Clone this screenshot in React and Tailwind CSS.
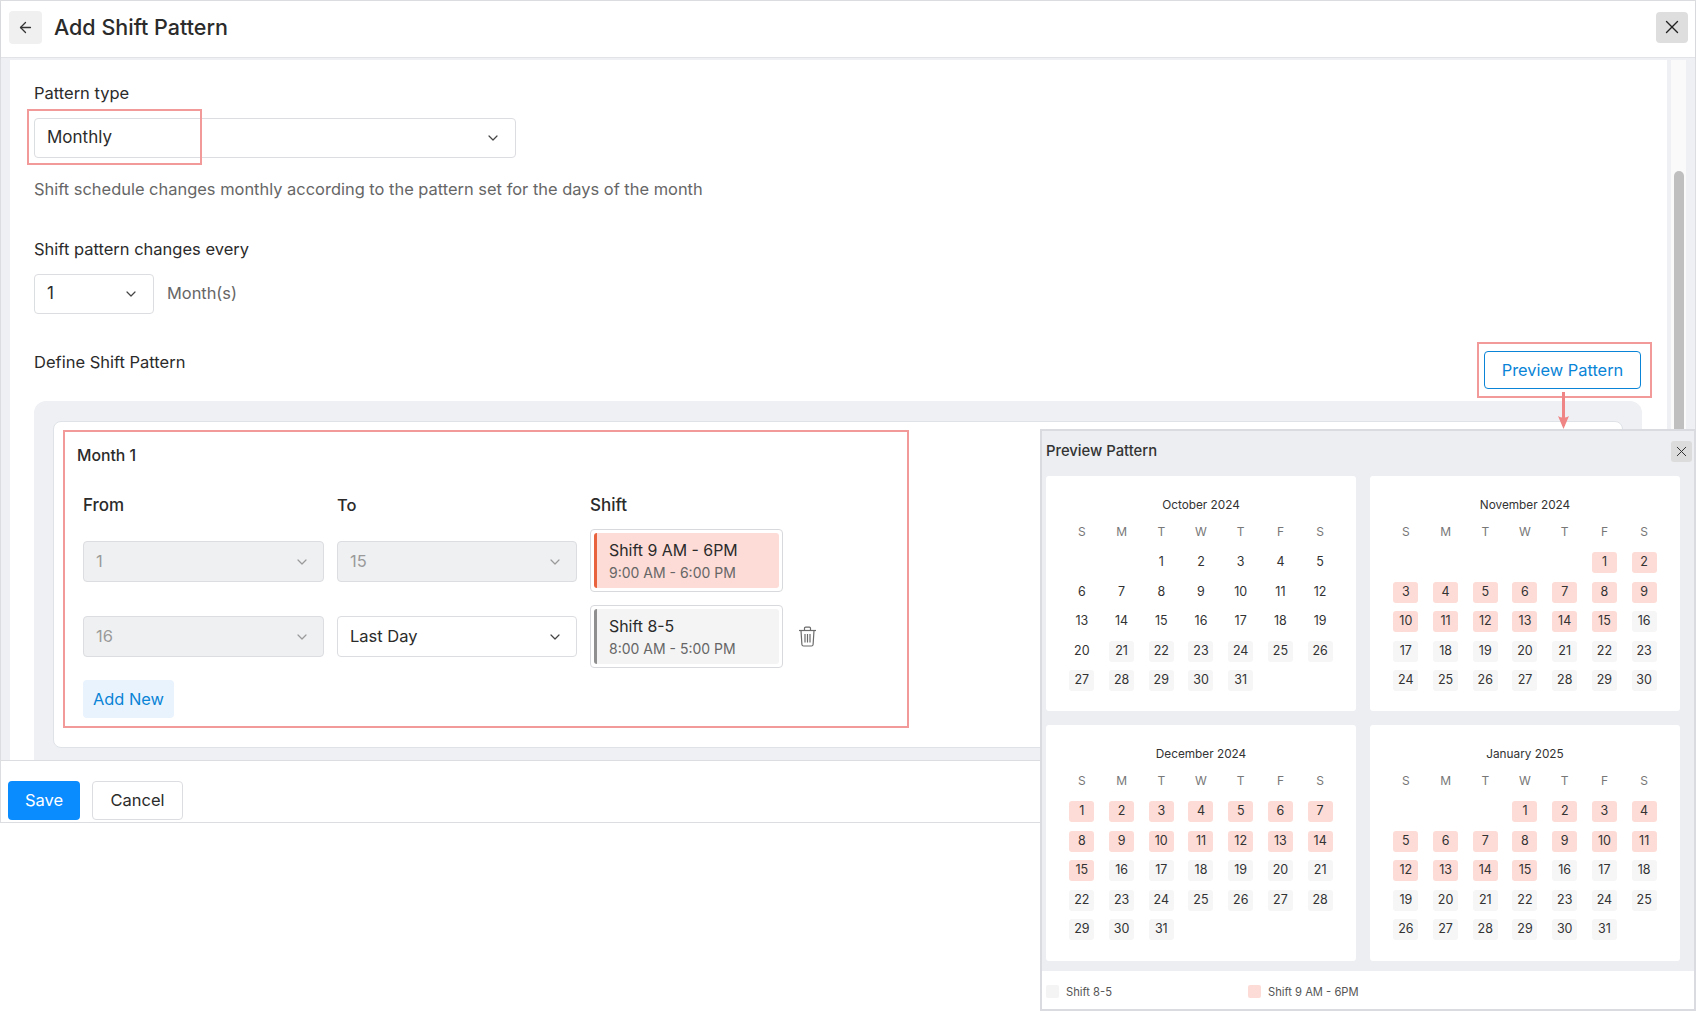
import React from "react";
import { ArrowLeft, ChevronDown, X } from "lucide-react";

const WEEK = ["S", "M", "T", "W", "T", "F", "S"];
const MONTHS = [
  { name: "October 2024", offset: 2, days: 31, pink: [0, 0], gray: 21 },
  { name: "November 2024", offset: 5, days: 30, pink: [1, 15], gray: 16 },
  { name: "December 2024", offset: 0, days: 31, pink: [1, 15], gray: 16 },
  { name: "January 2025", offset: 3, days: 31, pink: [1, 15], gray: 16 },
];

function Select({ value, disabled, lift, className }) {
  return (
    <div
      className={
        "flex items-center justify-between rounded-[4px] border pl-[12px] " +
        (disabled
          ? "border-[#dcdde0] bg-[#eff0f2] text-[#9a9a9a] "
          : "border-[#dcdde0] bg-white text-[#2b2b2b] ") +
        className
      }
    >
      <span className={lift ? "text-[17px]" : "text-[16.5px]"}>{value}</span>
      <ChevronDown
        size={16}
        strokeWidth={1.8}
        className={disabled ? "text-[#9a9a9a]" : "text-[#444]"}
      />
    </div>
  );
}

function ShiftCard({ title, time, bg, bar }) {
  return (
    <div className="h-[63px] rounded-[4px] border border-[#d8d9dc] bg-white p-[3px]">
      <div className={"flex h-full flex-col rounded-[3px] border-l-[3px] pl-[12px] pt-[6px] " + bg + " " + bar}>
        <span className="h-[23px] text-[15.9px] leading-[23px] text-[#2b2b2b]">{title}</span>
        <span className="h-[21px] text-[14px] leading-[21px] text-[#666]">{time}</span>
      </div>
    </div>
  );
}

function Calendar({ month }) {
  const cells = [];
  for (let i = 0; i < month.offset; i++) cells.push(<div key={"e" + i} />);
  for (let d = 1; d <= month.days; d++) {
    const pink = d >= month.pink[0] && d <= month.pink[1] && month.pink[0] > 0;
    const gray = d >= month.gray;
    cells.push(
      <div key={d} className="flex items-center justify-center">
        <div
          className={
            "flex h-[21px] w-[25px] items-center justify-center rounded-[3px] text-[12.5px] text-[#333] " +
            (pink ? "bg-[#fddcd7]" : gray ? "bg-[#f6f6f7]" : "")
          }
        >
          {d}
        </div>
      </div>
    );
  }
  return (
    <div className="min-h-[235px] rounded-[3px] bg-white px-[16px] pt-[20px]">
      <div className="h-[18px] text-center text-[11.8px] leading-[18px] text-[#333]">{month.name}</div>
      <div className="mt-[9px] grid h-[18px] grid-cols-7 text-center text-[12px] leading-[18px] text-[#777]">
        {WEEK.map((w, i) => (
          <div key={i}>{w}</div>
        ))}
      </div>
      <div className="mt-[7px] grid grid-cols-7 auto-rows-[29.5px]">{cells}</div>
    </div>
  );
}

function Trash() {
  return (
    <svg width="19" height="21" viewBox="0 0 19 21" fill="none" stroke="#6b6b6b" strokeWidth="1.2" className="ml-[2px]">
      <path d="M1 4.5h17" />
      <path d="M6.5 4.5V2.2c0-.7.4-1.1 1.1-1.1h3.8c.7 0 1.1.4 1.1 1.1v2.3" />
      <path d="M3 4.5l.9 14c.1 1 .7 1.5 1.6 1.5h8c.9 0 1.5-.5 1.6-1.5l.9-14" />
      <path d="M7 8v8.5M9.5 8v8.5M12 8v8.5" />
    </svg>
  );
}

export default function App() {
  return (
    <div className="relative h-[1011px] w-[1696px] overflow-hidden bg-white font-['Inter',sans-serif] text-[#2b2b2b]">
      <div className="flex h-[823px] flex-col border border-[#dcdde0]">
        <header className="flex h-[57px] shrink-0 items-center justify-between border-b border-[#e2e3e7] pb-[4px] pl-[8px] pr-[7px] shadow-[0_1px_2px_rgba(0,0,0,0.06)]">
          <div className="flex items-center">
            <div className="flex h-[33px] w-[33px] items-center justify-center rounded-[4px] bg-[#f0f0f1]">
              <ArrowLeft size={17} strokeWidth={1.8} className="text-[#333]" />
            </div>
            <h1 className="ml-[12px] text-[21.5px] font-medium text-[#2b2b2b]">Add Shift Pattern</h1>
          </div>
          <div className="flex h-[31px] w-[32px] items-center justify-center rounded-[4px] bg-[#dedede]">
            <X size={22} strokeWidth={1.5} className="text-[#222]" />
          </div>
        </header>

        <div className="flex min-h-0 flex-1 bg-[#eef0f4] pt-[2px]">
          <div className="w-[9px] shrink-0" />
          <main className="min-w-0 flex-1 overflow-hidden bg-white pl-[24px] pt-[23px]">
            <div className="h-[20px] text-[16.5px] leading-[20px]">Pattern type</div>
            <Select value="Monthly" lift className="mt-[15px] h-[40px] w-[482px] pr-[14px]" />
            <div className="mt-[19px] h-[24px] text-[16.45px] leading-[24px] text-[#666]">
              Shift schedule changes monthly according to the pattern set for the days of the month
            </div>
            <div className="mt-[38px] h-[20px] text-[16.5px] leading-[20px]">Shift pattern changes every</div>
            <div className="mt-[15px] flex items-center">
              <Select value="1" lift className="h-[40px] w-[120px] pr-[14px]" />
              <span className="ml-[13px] pb-[2px] text-[16.4px] text-[#666]">Month(s)</span>
            </div>
            <div className="mt-[37px] flex h-[38px] w-[1608px] items-start justify-between">
              <span className="pt-[1px] text-[16.5px] leading-[20px]">Define Shift Pattern</span>
              <button className="mr-[1px] h-[38px] w-[157px] rounded-[4px] border border-[#0a84d6] bg-white text-[16.4px] text-[#0a84d6]">
                Preview Pattern
              </button>
            </div>
            <section className="mt-[12px] h-[400px] w-[1608px] rounded-t-[12px] bg-[#eef0f3] px-[19px] pt-[20px]">
              <div className="h-[327px] rounded-[8px] border border-[#dfe3e8] bg-white pl-[23px] pt-[24px]">
                <div className="h-[20px] text-[15.8px] font-medium leading-[20px]">Month 1</div>
                <div className="ml-[6px] mt-[29px] grid grid-cols-[241px_240px_193px_auto] justify-start gap-x-[13px]">
                  <div className="h-[20px] text-[17px] font-medium leading-[20px]">From</div>
                  <div className="h-[20px] text-[16.5px] font-medium leading-[20px]">To</div>
                  <div className="h-[20px] text-[17px] font-medium leading-[20px]">Shift</div>
                  <div />
                </div>
                <div className="ml-[6px] mt-[14px] grid grid-cols-[241px_240px_193px_auto] items-center justify-start gap-x-[13px]">
                  <Select value="1" disabled className="mt-[2px] h-[41px] pr-[13px]" />
                  <Select value="15" disabled className="mt-[2px] h-[41px] pr-[13px]" />
                  <ShiftCard title="Shift 9 AM - 6PM" time="9:00 AM - 6:00 PM" bg="bg-[#fddcd7]" bar="border-[#e8623d]" />
                  <div />
                </div>
                <div className="ml-[6px] mt-[13px] grid grid-cols-[241px_240px_193px_auto] items-center justify-start gap-x-[13px]">
                  <Select value="16" disabled className="h-[41px] pr-[13px]" />
                  <Select value="Last Day" className="h-[41px] pr-[13px]" />
                  <ShiftCard title="Shift 8-5" time="8:00 AM - 5:00 PM" bg="bg-[#f4f4f5]" bar="border-[#8f8f8f]" />
                  <Trash />
                </div>
                <button className="ml-[6px] mt-[12px] h-[38px] w-[91px] rounded-[4px] bg-[#e9f3fd] text-[16.4px] text-[#0a84d6]">
                  Add New
                </button>
              </div>
            </section>
          </main>
          <div className="w-[4px] shrink-0" />
          <div className="w-[15px] shrink-0 bg-[#fafafa] pl-[3px] pt-[111px]">
            <div className="h-[400px] w-[10px] rounded-full bg-[#bfbfbf]" />
          </div>
          <div className="w-[9px] shrink-0" />
        </div>

        <footer className="flex h-[62px] shrink-0 items-start gap-[12px] border-t border-[#dcdde0] bg-white pl-[7px] pt-[20px]">
          <button className="h-[39px] w-[72px] rounded-[4px] bg-[#0a8cff] text-[16.5px] text-white">Save</button>
          <button className="h-[39px] w-[91px] rounded-[4px] border border-[#dcdde0] bg-white text-[16.5px] text-[#2b2b2b]">
            Cancel
          </button>
        </footer>
      </div>

      {/* annotations */}
      <div className="absolute left-[27px] top-[109px] h-[56px] w-[175px] border-2 border-[#f29a9a]" />
      <div className="absolute left-[1477px] top-[342px] h-[56px] w-[175px] border-2 border-[#f29a9a]" />
      <div className="absolute left-[63px] top-[430px] h-[298px] w-[846px] border-2 border-[#f29a9a]" />
      <svg className="absolute left-[1557px] top-[392px]" width="14" height="38" viewBox="0 0 14 38" fill="none">
        <path d="M6.5 0v34" stroke="#f08585" strokeWidth="3" />
        <path d="M1 24l5.5 13L12 24c-3.4 2-7.6 2-11 0z" fill="#f08585" />
      </svg>

      {/* preview popup */}
      <aside className="absolute bottom-0 left-[1040px] right-0 top-[429px] flex flex-col border-2 border-[#d9dbe0] bg-[#eceef2]">
        <div className="flex h-[45px] shrink-0 items-center justify-between pb-[5px] pl-[4px] pr-[2px]">
          <span className="text-[14.8px] font-medium text-[#333]">Preview Pattern</span>
          <div className="flex h-[21px] w-[21px] items-center justify-center rounded-[3px] bg-[#dcdcdc]">
            <X size={17} strokeWidth={1.4} className="text-[#333]" />
          </div>
        </div>
        <div className="ml-[4px] grid w-[634px] grid-cols-2 grid-rows-[235px_236px] gap-x-[14px] gap-y-[14px]">
          {MONTHS.map((m) => (
            <Calendar key={m.name} month={m} />
          ))}
        </div>
        <div className="mt-[10px] flex flex-1 items-center bg-white pl-[4px] pt-[4px]">
          <div className="flex w-[202px] items-center">
            <span className="h-[13px] w-[13px] rounded-[2px] bg-[#f4f4f5]" />
            <span className="ml-[7px] text-[11.2px] text-[#555]">Shift 8-5</span>
          </div>
          <div className="flex items-center">
            <span className="h-[13px] w-[13px] rounded-[2px] bg-[#fddcd7]" />
            <span className="ml-[7px] text-[11.2px] text-[#555]">Shift 9 AM - 6PM</span>
          </div>
        </div>
      </aside>
    </div>
  );
}
